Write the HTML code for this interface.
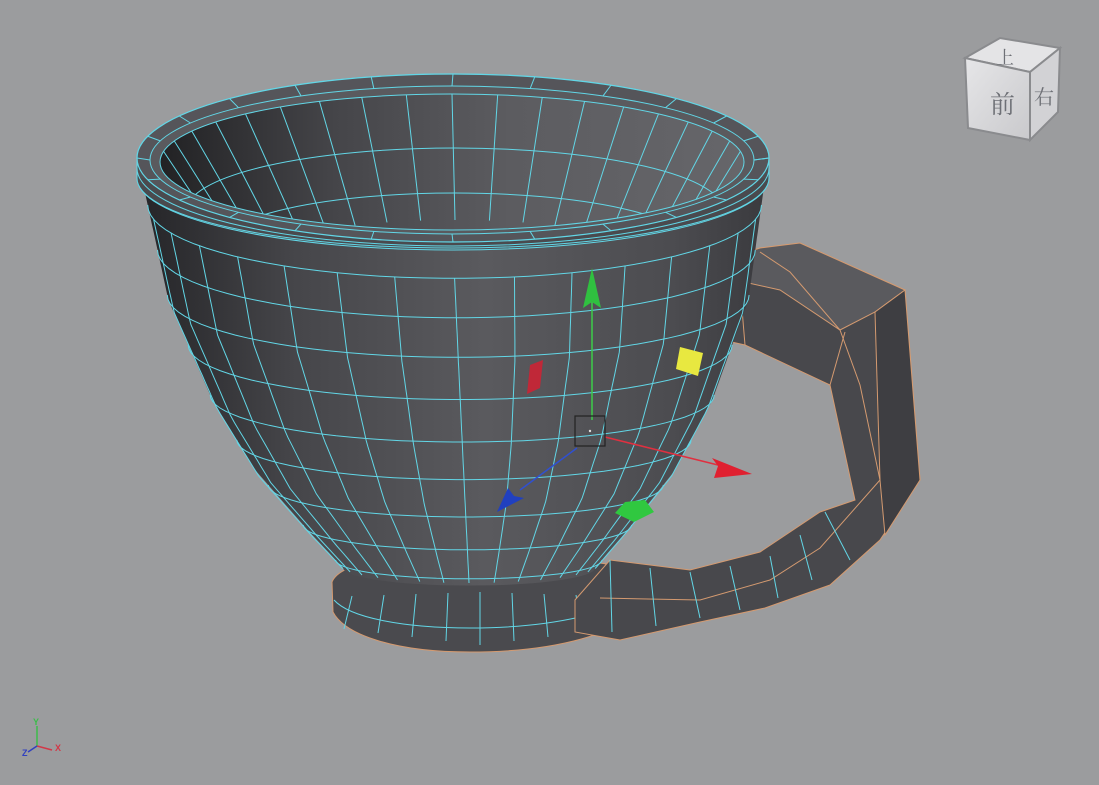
<!DOCTYPE html>
<html><head><meta charset="utf-8"><style>
html,body{margin:0;padding:0;background:#9b9c9e;}
svg{display:block}
</style></head><body>
<svg id="s" width="1099" height="785" viewBox="0 0 1099 785" xmlns="http://www.w3.org/2000/svg">
<defs>
<linearGradient id="bodyG" x1="0" x2="1" y1="0" y2="0">
<stop offset="0" stop-color="#252528"/><stop offset="0.25" stop-color="#46464a"/><stop offset="0.55" stop-color="#5a5a5e"/><stop offset="0.85" stop-color="#4c4c50"/><stop offset="1" stop-color="#3a3a3e"/></linearGradient>
<linearGradient id="inG" x1="0" x2="1" y1="0" y2="0">
<stop offset="0" stop-color="#222224"/><stop offset="0.3" stop-color="#454549"/><stop offset="0.6" stop-color="#5c5c60"/><stop offset="1" stop-color="#66666a"/></linearGradient>
<linearGradient id="rimG" x1="0" x2="1"><stop offset="0" stop-color="#3a3a3e"/><stop offset="0.5" stop-color="#55555a"/><stop offset="1" stop-color="#4a4a4e"/></linearGradient>
<linearGradient id="cubeG" x1="0" x2="1" y1="0" y2="1"><stop offset="0" stop-color="#e6e6e8"/><stop offset="1" stop-color="#c9c9cc"/></linearGradient>
<clipPath id="inClip"><ellipse cx="452" cy="162" rx="292" ry="68"/></clipPath>
</defs>
<g id="foot"></g>
<g id="handle"></g>
<g id="cup"></g>
<g id="giz"></g>
<g>
<polygon points="965,58 1000,38 1060,48 1030,72" fill="#e4e4e6" stroke="#8a8b8e" stroke-width="2"/>
<polygon points="965,58 1030,72 1030,140 968,128" fill="url(#cubeG)" stroke="#8a8b8e" stroke-width="2"/>
<polygon points="1030,72 1060,48 1058,112 1030,140" fill="#d2d2d5" stroke="#8a8b8e" stroke-width="2"/>
<text x="990" y="113" font-family="'Liberation Serif','Noto Serif CJK SC',serif" font-size="25" fill="#6e7076">前</text>
<text x="1034" y="104" font-family="'Liberation Serif','Noto Serif CJK SC',serif" font-size="20" fill="#6e7076">右</text>
<text x="996" y="64" font-family="'Liberation Serif','Noto Serif CJK SC',serif" font-size="18" fill="#6e7076">上</text>
</g>
<g stroke-width="1.5" fill="none">
<line x1="37" y1="746" x2="37" y2="726" stroke="#3cbc4a"/>
<line x1="37" y1="746" x2="52" y2="750" stroke="#d23848"/>
<line x1="37" y1="746" x2="28" y2="752" stroke="#3040c0"/>
</g>
<text x="33" y="725" font-family="Liberation Sans,sans-serif" font-size="9" font-weight="bold" fill="#3cbc4a">Y</text>
<text x="55" y="751" font-family="Liberation Sans,sans-serif" font-size="9" font-weight="bold" fill="#d23848">X</text>
<text x="22" y="756" font-family="Liberation Sans,sans-serif" font-size="9" font-weight="bold" fill="#3040c0">Z</text>
</svg>
<script>
var NS="http://www.w3.org/2000/svg";
function el(p,t,a){var e=document.createElementNS(NS,t);for(var k in a)e.setAttribute(k,a[k]);p.appendChild(e);return e;}
var CY="#62d6e6",OR="#d49a70";
var foot=document.getElementById('foot');
el(foot,'path',{d:"M332,582 C340,562 390,556 470,556 C560,556 610,562 640,572 L640,608 C620,632 560,652 470,652 C395,652 345,635 333,612 Z",fill:"#4a4a4e",stroke:OR,"stroke-width":1});
el(foot,'path',{d:"M334,600 C350,618 405,628 470,628 C545,628 600,616 640,596",fill:"none",stroke:CY,"stroke-width":1});
for(var i=0;i<9;i++){var x=352+i*32;el(foot,'line',{x1:x,y1:592+Math.abs(i-4)*1,x2:x+(i-4)*2,y2:645-Math.abs(i-4)*4,stroke:CY,"stroke-width":1});}
var h=document.getElementById('handle');
el(h,'polygon',{points:"700,268 760,248 800,243 905,290 920,480 880,540 830,585 765,608 700,622 620,640 575,632 575,600 610,560 690,570 760,552 820,512 855,500 830,385 745,345 700,335",fill:"#48484c",stroke:OR,"stroke-width":1});
el(h,'polygon',{points:"700,268 760,248 800,243 905,290 875,312 840,330 780,290 735,280",fill:"#5a5a5e",stroke:OR,"stroke-width":1});
el(h,'polygon',{points:"875,312 905,290 920,480 885,535 880,480",fill:"#3e3e42",stroke:OR,"stroke-width":1});
el(h,'polyline',{points:"760,252 790,272 840,330 860,385 880,480",fill:"none",stroke:OR,"stroke-width":1});
el(h,'polyline',{points:"600,598 700,600 770,580 820,548 880,480",fill:"none",stroke:OR,"stroke-width":1});
[[610,560,612,632],[650,568,656,626],[690,572,700,618],[730,566,740,610],[770,556,778,598],[800,535,812,580],[825,512,850,560]].forEach(function(a){el(h,'line',{x1:a[0],y1:a[1],x2:a[2],y2:a[3],stroke:CY,"stroke-width":1});});
el(h,'line',{x1:745,y1:345,x2:740,y2:285,stroke:OR});el(h,'line',{x1:830,y1:385,x2:845,y2:332,stroke:OR});
var cup=document.getElementById('cup');
var rs=[[165,314],[300,290],[400,250],[470,210],[530,160],[568,126]];
function R(c){for(var i=0;i<rs.length-1;i++){if(c<=rs[i+1][0]){var f=(c-rs[i][0])/(rs[i+1][0]-rs[i][0]);return rs[i][1]+f*(rs[i+1][1]-rs[i][1]);}}return rs[rs.length-1][1];}
function CX(c){return 453+(c-165)*0.04;}
function RY(c){var r=R(c);var k=0.25-0.11*(c-165)/400;return r*k;}
var pts=[];
for(var c=170;c<=568;c+=6){pts.push([CX(c)-R(c),c]);}
var d="M"+pts.map(function(p){return p[0].toFixed(1)+","+p[1].toFixed(1)}).join(" L");
for(var a=180;a>=0;a-=6){var t=a*Math.PI/180;d+=" L"+(CX(568)+R(568)*Math.cos(t)).toFixed(1)+","+(568+RY(568)*Math.sin(t)).toFixed(1);}
for(var c=568;c>=170;c-=6){d+=" L"+(CX(c)+R(c)).toFixed(1)+","+c;}
d+="Z";
el(cup,'path',{d:d,fill:"url(#bodyG)"});
[205,250,295,345,395,440,485,525,560].forEach(function(c){
 var p="";for(var a=0;a<=180;a+=4){var t=a*Math.PI/180;p+=(a?" L":"M")+(CX(c)+R(c)*Math.cos(t)).toFixed(1)+","+(c+RY(c)*Math.sin(t)).toFixed(1);}
 el(cup,'path',{d:p,fill:"none",stroke:CY,"stroke-width":1});});
for(var k=1;k<16;k++){var t=k*Math.PI/16;var p="";
 for(var c=205;c<=568;c+=8){p+=(c==205?"M":" L")+(CX(c)+R(c)*Math.cos(t)).toFixed(1)+","+(c+RY(c)*Math.sin(t)).toFixed(1);}
 el(cup,'path',{d:p,fill:"none",stroke:CY,"stroke-width":1});}
el(cup,'path',{d:"M137,158 A316,84 0 0 1 769,158 L769,178 A316,72 0 0 1 137,178Z",fill:"#4e4e52",stroke:CY,"stroke-width":1});
el(cup,'path',{d:"M137,178 A316,70 0 0 0 769,178",fill:"#4a4a4e",stroke:CY,"stroke-width":1});
el(cup,'path',{d:"M137,168 A316,78 0 0 0 769,168",fill:"none",stroke:CY,"stroke-width":1});
el(cup,'ellipse',{cx:453,cy:158,rx:316,ry:84,fill:"#55555a",stroke:CY,"stroke-width":1.2});
el(cup,'ellipse',{cx:452,cy:160,rx:302,ry:74,fill:"#5a5a5e",stroke:CY,"stroke-width":1});
el(cup,'ellipse',{cx:452,cy:162,rx:292,ry:68,fill:"url(#inG)",stroke:CY,"stroke-width":1});
var ig=el(cup,'g',{"clip-path":"url(#inClip)"});
[[210,268,62],[245,235,52],[280,200,45]].forEach(function(r){el(ig,'path',{d:"M"+(455-r[1])+","+r[0]+" A"+r[1]+","+r[2]+" 0 0 1 "+(455+r[1])+","+r[0],fill:"none",stroke:CY,"stroke-width":1});});
for(var k=1;k<20;k++){var t=Math.PI+k*Math.PI/20;var x1=452+292*Math.cos(t),y1=162+68*Math.sin(t);var x2=455+220*Math.cos(t),y2=270+50*Math.sin(t);el(ig,'line',{x1:x1,y1:y1,x2:x2,y2:y2,stroke:CY,"stroke-width":1});}
for(var k=0;k<=24;k++){var t=k*Math.PI/12;var x1=453+316*Math.cos(t),y1=158+84*Math.sin(t);var x2=452+302*Math.cos(t),y2=160+74*Math.sin(t);el(cup,'line',{x1:x1,y1:y1,x2:x2,y2:y2,stroke:CY,"stroke-width":1});}
var g=document.getElementById('giz');
el(g,'line',{x1:592,y1:420,x2:592,y2:300,stroke:"#3ccc48","stroke-width":1.5});
el(g,'polygon',{points:"592,268 583,308 592,302 601,308",fill:"#30c040"});
el(g,'line',{x1:605,y1:437,x2:718,y2:465,stroke:"#e03040","stroke-width":1.5});
el(g,'polygon',{points:"752,474 712,458 718,466 714,478",fill:"#e02030"});
el(g,'line',{x1:577,y1:448,x2:520,y2:490,stroke:"#3050d0","stroke-width":1.5});
el(g,'polygon',{points:"497,512 508,488 514,496 524,498",fill:"#2040c0"});
el(g,'rect',{x:575,y:416,width:30,height:30,fill:"none",stroke:"#222","stroke-width":1.2});
el(g,'circle',{cx:590,cy:431,r:1.2,fill:"#ddd"});
el(g,'polygon',{points:"680,347 703,353 698,376 676,369",fill:"#e8e840"});
el(g,'polygon',{points:"530,365 543,360 540,388 527,394",fill:"#c02838"});
el(g,'polygon',{points:"625,502 645,500 654,512 634,522 615,513",fill:"#30c840"});
</script>
</body></html>
